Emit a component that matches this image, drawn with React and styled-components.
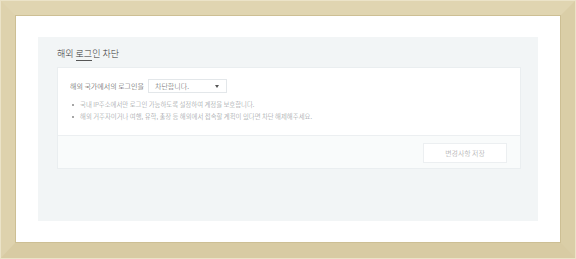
import styled, { createGlobalStyle } from "styled-components";

const Global = createGlobalStyle`
    html, body { margin: 0; padding: 0; background: #fff; }
    body { font-family: "Noto Sans CJK KR", "Noto Sans", sans-serif; font-weight: 300; }
    * { box-sizing: border-box; }
`;

export default function App() {
    return (
        <>
            <Global />
            <Frame>
                <Panel>
                    <Title>해외 <Marked>로그</Marked>인 차단</Title>
                    <Card>
                        <CardBody>
                            <Row>
                                <Label>해외 국가에서의 로그인을</Label>
                                <Select>
                                    <span>차단합니다.</span>
                                    <Caret />
                                </Select>
                            </Row>
                            <Notes>
                                <li>국내 IP주소에서만 로그인 가능하도록 설정하여 계정을 보호합니다.</li>
                                <li>해외 거주자이거나 여행, 유학, 출장 등 해외에서 접속할 계획이 있다면 차단 해제해주세요.</li>
                            </Notes>
                        </CardBody>
                        <CardFooter>
                            <SaveButton>변경사항 저장</SaveButton>
                        </CardFooter>
                    </Card>
                </Panel>
            </Frame>
        </>
    );
}

const Frame = styled.div`
    width: 576px;
    height: 259px;
    background: #fff;
    border-style: solid;
    border-width: 15px 15px 16px 15px;
    border-color: #e0d5b1 #dacea7 #d8cba3 #ded2ad;
    box-shadow: inset 0 0 0 1px #cdbf94;
    padding: 22px 23px;
    position: relative;
    &::before {
        content: "";
        position: absolute;
        inset: -15px -15px -16px -15px;
        border: 1px solid #ebe3c8;
        pointer-events: none;
    }
`;

const Panel = styled.div`
    height: 184px;
    background: #f2f5f6;
    padding: 11px 17px 0 19px;
`;

const Title = styled.h2`
    margin: 0 0 7px;
    font-size: 9px;
    line-height: 12px;
    font-weight: 300;
    color: #333;
`;

const Marked = styled.span`
    border-bottom: 1px solid #555;
`;

const Card = styled.div`
    background: #fff;
    border: 1px solid #eaeef0;
    height: 102px;
    display: flex;
    flex-direction: column;
`;

const CardBody = styled.div`
    height: 68px;
    padding: 11px 13px 0 12px;
    border-bottom: 1px solid #eceff1;
`;

const Row = styled.div`
    display: flex;
    align-items: center;
    gap: 4px;
`;

const Label = styled.span`
    font-size: 7px;
    color: #444;
    white-space: nowrap;
`;

const Select = styled.div`
    width: 79px;
    height: 14px;
    border: 1px solid #e3e7ea;
    background: #fff;
    display: flex;
    align-items: center;
    justify-content: space-between;
    padding: 0 7px 0 6px;
    font-size: 7px;
    color: #555;
`;

const Caret = styled.i`
    width: 0;
    height: 0;
    border-left: 2px solid transparent;
    border-right: 2px solid transparent;
    border-top: 3px solid #555;
`;

const Notes = styled.ul`
    margin: 6px 0 0;
    padding: 0 0 0 10px;
    list-style: none;
    li {
        position: relative;
        font-size: 6.4px;
        line-height: 12px;
        color: #8a8f93;
        white-space: nowrap;
    }
    li::before {
        content: "";
        position: absolute;
        left: -8px;
        top: 5px;
        width: 2px;
        height: 2px;
        border-radius: 50%;
        background: #888;
    }
`;

const CardFooter = styled.div`
    flex: 1;
    background: #f9fbfb;
    display: flex;
    justify-content: flex-end;
    align-items: flex-start;
    padding: 7px 13px 0 0;
`;

const SaveButton = styled.button`
    width: 84px;
    height: 20px;
    background: #fff;
    border: 1px solid #eceff1;
    font-family: inherit;
    font-weight: 300;
    font-size: 6.9px;
    color: #999;
    padding: 0;
`;
